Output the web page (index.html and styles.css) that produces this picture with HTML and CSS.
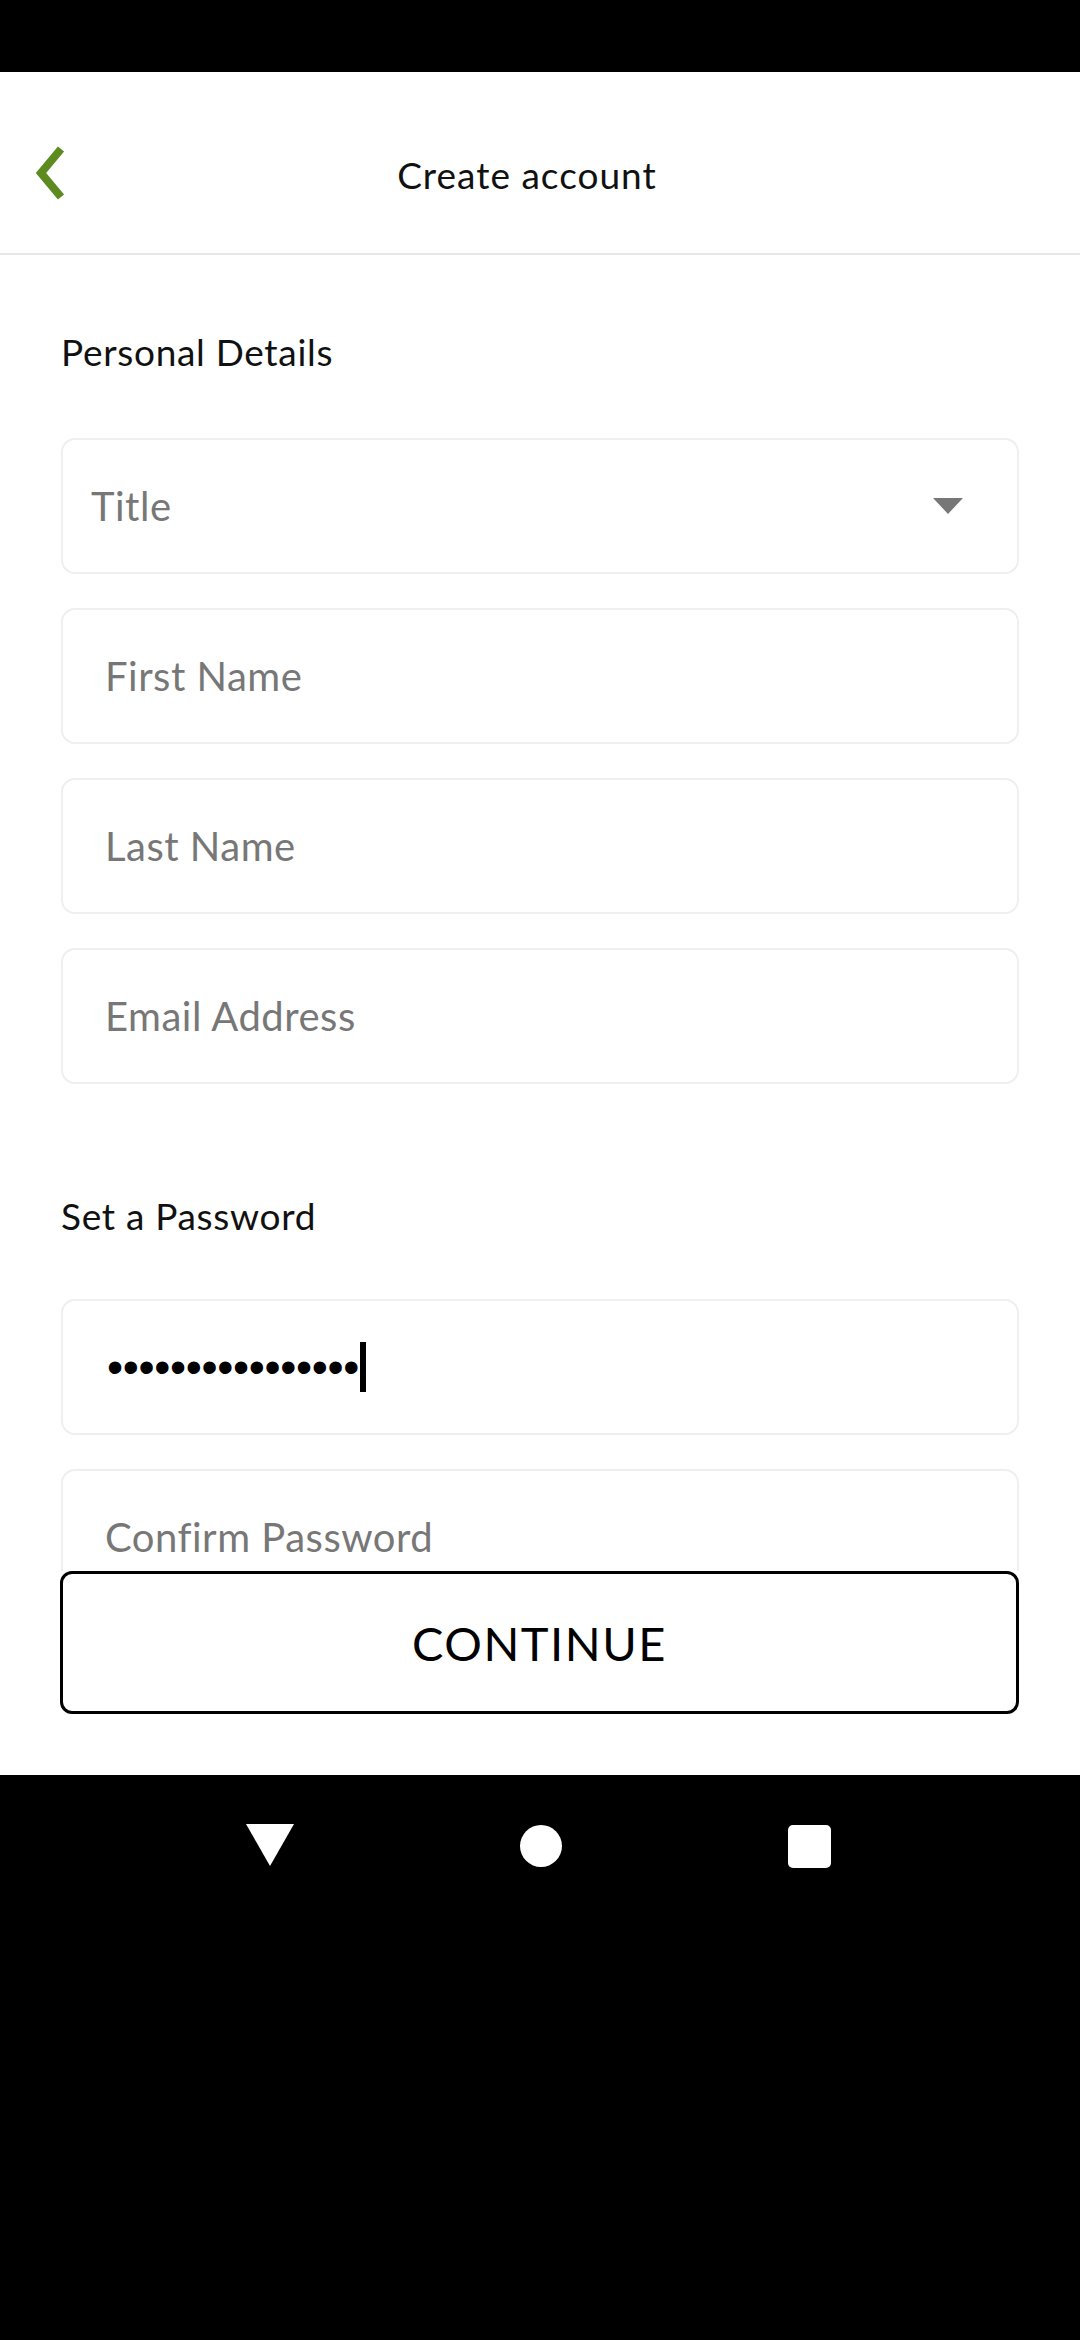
FILE: index.html
```html
<!DOCTYPE html>
<html lang="en">
<head>
<meta charset="utf-8">
<title>Create account</title>
<link rel="stylesheet" href="styles.css">
</head>
<body>
<div class="screen">
  <div class="status-bar"></div>
  <header class="app-header">
    <button class="back" aria-label="Back">
      <svg width="34" height="54" viewBox="0 0 34 54"><path d="M28 3 L8 27 L28 51" fill="none" stroke="#5e8b1f" stroke-width="8" stroke-linejoin="miter"/></svg>
    </button>
    <h1 class="header-title">Create account</h1>
  </header>
  <main class="scroll">
    <h2 class="section-title">Personal Details</h2>
    <div class="fields">
      <div class="field select">
        <span class="placeholder">Title</span>
        <span class="caret-down"></span>
      </div>
      <div class="field"><span class="placeholder">First Name</span></div>
      <div class="field"><span class="placeholder">Last Name</span></div>
      <div class="field"><span class="placeholder">Email Address</span></div>
    </div>
    <h2 class="section-title pw-title">Set a Password</h2>
    <div class="fields">
      <div class="field pw"><span class="dots">••••••••••••••••</span><span class="cursor"></span></div>
      <div class="field"><span class="placeholder">Confirm Password</span></div>
    </div>
  </main>
  <div class="footer">
    <button class="continue">CONTINUE</button>
  </div>
  <nav class="nav-bar">
    <span class="nav-back"></span>
    <span class="nav-home"></span>
    <span class="nav-recent"></span>
  </nav>
</div>
</body>
</html>
```
FILE: styles.css
```css
* { box-sizing: border-box; }
html, body { margin: 0; padding: 0; background: #000; }
body { font-family: Lato, "Open Sans", sans-serif; color: #111; }
.screen { width: 1080px; height: 2340px; display: flex; flex-direction: column; background: #fff; }
.status-bar { height: 72px; background: #000; flex: none; }
.app-header {
  height: 183px; flex: none; display: flex; align-items: center; justify-content: center;
  padding-top: 24px; border-bottom: 2px solid #e6e6e6; position: relative;
}
.back {
  position: absolute; left: 33px; top: 74px; background: none; border: 0; padding: 0;
  width: 34px; height: 54px; display: block;
}
.back svg { display: block; }
.header-title { margin: 0 26px 0 0; font-weight: 400; font-size: 37px; letter-spacing: 1px; color: #111; }
.scroll { height: 1316px; flex: none; overflow: hidden; padding: 73px 61px 0 61px; }
.section-title { margin: 0 0 62px 0; font-weight: 400; font-size: 37px; line-height: 48px; height: 48px; color: #111; letter-spacing: 0.7px; }
.pw-title { margin-top: 108px; margin-bottom: 59px; }
.fields { display: flex; flex-direction: column; gap: 34px; }
.field {
  height: 136px; flex: none; border: 2px solid #efefef; border-radius: 14px;
  display: flex; align-items: center; padding: 0 42px; background: #fff;
}
.field.select { padding: 0 54px 0 28px; justify-content: space-between; }
.placeholder { font-size: 40px; color: #777; letter-spacing: 0.5px; }
.caret-down { width: 0; height: 0; border-left: 15px solid transparent; border-right: 15px solid transparent; border-top: 16px solid #777; }
.field.pw { padding-left: 44px; }
.dots { font-family: "Liberation Sans", sans-serif; font-size: 46px; color: #000; letter-spacing: -0.35px; line-height: 1; }
.cursor { width: 6px; height: 50px; background: #000; margin-left: 1px; }
.footer { flex: none; padding: 0 61px 61px 60px; }
.continue {
  width: 100%; height: 143px; border: 3px solid #000; border-radius: 12px; background: #fff;
  font-family: Lato, "Open Sans", sans-serif; font-size: 47px; color: #000; letter-spacing: 1.5px; padding: 0;
}
.nav-bar { flex: 1; background: #000; display: flex; justify-content: space-between; align-items: flex-start; padding: 48px 249px 0 246px; }
.nav-back { width: 0; height: 0; border-left: 24px solid transparent; border-right: 24px solid transparent; border-top: 42px solid #fff; margin-top: 1px; }
.nav-home { width: 42px; height: 42px; border-radius: 50%; background: #fff; margin-top: 2px; }
.nav-recent { width: 43px; height: 43px; border-radius: 5px; background: #fff; margin-top: 2px; }
```
